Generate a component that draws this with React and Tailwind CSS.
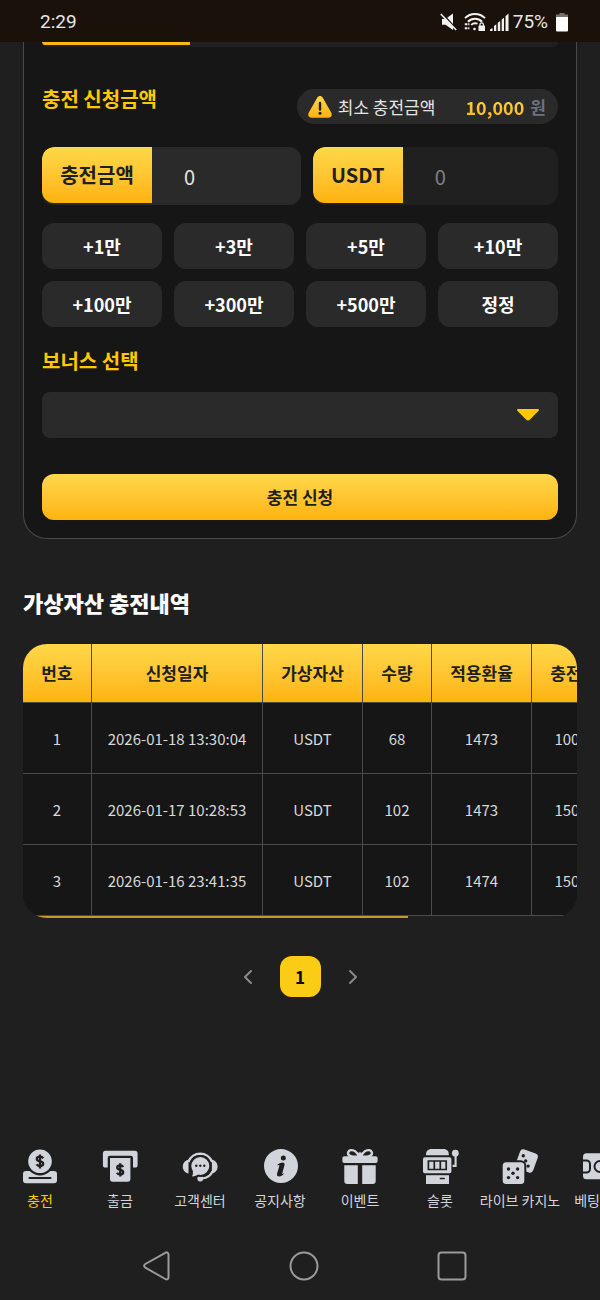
/**
 * App.jsx – Mobile deposit page (virtual asset charge).
 *
 * Sections:
 *  1. StatusBar    – phone clock, signal, battery
 *  2. DepositForm  – amount inputs, quick amount buttons, bonus select, submit
 *  3. HistoryTable – deposit history, wider than the screen
 *  4. Pagination
 *  5. BottomMenu   – category shortcuts
 *  6. SystemNav    – back / home / recents
 */

import { ChevronLeft, ChevronRight } from 'lucide-react'

const quickAmounts = ['+1만', '+3만', '+5만', '+10만', '+100만', '+300만', '+500만', '정정']

const columns = [
    { label: '번호',     width: 'w-[69px]' },
    { label: '신청일자', width: 'w-[171px]' },
    { label: '가상자산', width: 'w-[100px]' },
    { label: '수량',     width: 'w-[69px]' },
    { label: '적용환율', width: 'w-[100px]' },
    { label: '충전금액', width: 'w-[100px]' },
]

const rows = [
    ['1', '2026-01-18 13:30:04', 'USDT', '68', '1473', '100,164'],
    ['2', '2026-01-17 10:28:53', 'USDT', '102', '1473', '150,246'],
    ['3', '2026-01-16 23:41:35', 'USDT', '102', '1474', '150,348'],
]

/* ── Icons ──────────────────────────────────────────────────────────── */

function Icon({ children }) {
    return (
        <svg viewBox="0 0 36 36" className="size-9 overflow-visible fill-[#d1d5db] stroke-[#1f1f1f]" strokeWidth="0" aria-hidden="true">
            {children}
        </svg>
    )
}

function DepositIcon() {
    return (
        <Icon>
            <rect x="1" y="22" width="34" height="12.3" rx="3" />
            <circle cx="18" cy="12.3" r="13" strokeWidth="2.4" />
            <path d="M7.5 29H28.5" strokeWidth="2.2" strokeLinecap="round" />
            <path d="M21.2 9.4c-.6-1.100-1.800-1.700-3.200-1.700-1.800 0-3.200.9-3.200 2.300 0 3.400 6.400 1.600 6.400 4.800 0 1.500-1.400 2.300-3.200 2.300-1.500 0-2.800-.6-3.400-1.800M18 5.400v14" fill="none" strokeWidth="2.3" />
        </Icon>
    )
}

function WithdrawIcon() {
    return (
        <Icon>
            <path d="M3.5 1.7H33a2.6 2.6 0 0 1 2.6 2.6V16a2.6 2.6 0 0 1-2.6 2.6h-2V9a2.3 2.3 0 0 0-2.3-2.3H8A2.3 2.3 0 0 0 5.7 9v9.6H3.5A2.6 2.6 0 0 1 .9 16V4.3A2.6 2.6 0 0 1 3.5 1.7z" />
            <path d="M8 9h20.4v21a2.7 2.7 0 0 1-2.7 2.7h-15A2.7 2.7 0 0 1 8 30z" />
            <path d="M21.2 18c-.6-1.100-1.700-1.600-3-1.600-1.700 0-3 .9-3 2.200 0 3.200 6 1.500 6 4.600 0 1.400-1.300 2.200-3 2.200-1.400 0-2.600-.5-3.200-1.700M18.200 14.300v13.200" fill="none" strokeWidth="2.3" />
        </Icon>
    )
}

function SupportIcon() {
    return (
        <Icon>
            <path d="M6.5 10.800v13.700C3.200 24 .8 21.200.8 17.700s2.400-6.400 5.700-6.900z" />
            <path d="M29.900 10.800v13.700c3.300-.5 5.700-3.300 5.700-6.800s-2.400-6.400-5.700-6.900z" />
            <path d="M6.300 13A12.700 12.700 0 0 1 30.100 13" fill="none" stroke="#d1d5db" strokeWidth="2.4" />
            <path d="M30.500 22c-1.500 4.500-5 7-10.500 7.500" fill="none" stroke="#d1d5db" strokeWidth="2.2" />
            <circle cx="18.3" cy="29.5" r="2.9" />
            <circle cx="18.3" cy="17" r="10" strokeWidth="2" />
            <path d="M10.500 20.500c.8 3 .6 5-.6 6.900 2.800 0 5.100-1 6.900-2.500z" />
            <g fill="#1f1f1f">
                <circle cx="14.3" cy="16.800" r="1.200" />
                <circle cx="18.3" cy="16.800" r="1.200" />
                <circle cx="22.300" cy="16.800" r="1.200" />
            </g>
        </Icon>
    )
}

function InfoIcon() {
    return (
        <Icon>
            <circle cx="19" cy="17.1" r="17" />
            <circle cx="21.300" cy="9" r="2.500" fill="#1f1f1f" />
            <path d="M15 16.300c1.800-2 3.700-2.900 5.500-2.900 1.700 0 2.400 1 2 2.600l-2.200 8.200c-.2.900.3 1 1 .5l1.200-.9c-1.500 2.500-3.400 3.800-5.300 3.800-1.800 0-2.600-1.200-2.100-3l2.200-7.600c.2-.9-.3-1.100-1.100-.7z" fill="#1f1f1f" />
        </Icon>
    )
}

function GiftIcon() {
    return (
        <Icon>
            <path d="M17 7.500C12 8 5.800 7.500 6 4.200 6.300.8 10.500.1 13.300 2.400 15.300 4 16.500 5.800 17 7.500zM19 7.500c5 .5 11.200 0 11-3.300C29.700.8 25.500.1 22.700 2.400 20.700 4 19.500 5.800 19 7.500z" fill="none" stroke="#d1d5db" strokeWidth="2.300" />
            <circle cx="18" cy="5.800" r="2.600" />
            <rect x=".4" y="7.300" width="35.200" height="6.700" rx="1.800" />
            <path d="M2.300 16.200h13.500V35H5.300a3 3 0 0 1-3-3zM20.200 16.200h13.500V32a3 3 0 0 1-3 3H20.200z" />
        </Icon>
    )
}

function SlotIcon() {
    return (
        <Icon>
            <path d="M4 6.300V5.500C4 2.300 6 0 9.500 0h12C25 0 26.800 2.300 26.800 5.500v.8z" />
            <rect x="1" y="8.300" width="28.400" height="16" rx="1.800" />
            <path d="M6.400 12h17.800v8.500H6.400zM12.300 12v8.500M18.300 12v8.500" fill="none" strokeWidth="1.700" />
            <path d="M4 26.200h23V35H4z" />
            <path d="M18.500 29.500h3.600" strokeWidth="1.700" strokeLinecap="round" />
            <circle cx="33.300" cy="4.200" r="3.400" />
            <path d="M33.600 6v10.900h-3" fill="none" stroke="#d1d5db" strokeWidth="2.100" />
        </Icon>
    )
}

function DiceIcon() {
    return (
        <Icon>
            <rect x="15.200" y="2" width="18.800" height="20" rx="3.500" transform="rotate(20 24.600 12)" />
            <rect x="-.3" y="12.300" width="23.600" height="23.600" rx="4.500" strokeWidth="2" />
            <g fill="#1f1f1f">
                <circle cx="21.300" cy="6.700" r="1.700" />
                <circle cx="23.700" cy="11.900" r="1.700" />
                <circle cx="26.100" cy="17.100" r="1.700" />
                <circle cx="6.500" cy="20" r="1.700" />
                <circle cx="15.600" cy="20" r="1.700" />
                <circle cx="11" cy="24.300" r="1.700" />
                <circle cx="6.500" cy="28.600" r="1.700" />
                <circle cx="15.600" cy="28.600" r="1.700" />
            </g>
        </Icon>
    )
}

function TicketIcon() {
    return (
        <Icon>
            <rect x="1" y="4.300" width="34" height="26" rx="3.500" />
            <path d="M0 11.500h4.500a3.500 3.500 0 0 1 3.500 3.500v5a3.500 3.500 0 0 1-3.500 3.500H0M36 11.500h-4.500a3.500 3.500 0 0 0-3.500 3.500v5a3.500 3.500 0 0 0 3.500 3.500H36" fill="none" strokeWidth="2" />
            <circle cx="18" cy="17.500" r="5.500" fill="none" strokeWidth="2" />
        </Icon>
    )
}

const menu = [
    { icon: DepositIcon,  label: '충전', active: true },
    { icon: WithdrawIcon, label: '출금' },
    { icon: SupportIcon,  label: '고객센터' },
    { icon: InfoIcon,     label: '공지사항' },
    { icon: GiftIcon,     label: '이벤트' },
    { icon: SlotIcon,     label: '슬롯' },
    { icon: DiceIcon,     label: '라이브 카지노' },
    { icon: TicketIcon,   label: '베팅내역' },
]

/* ── 1. Status bar ──────────────────────────────────────────────────── */

function StatusBar() {
    return (
        <header className="flex h-[42px] shrink-0 items-center justify-between bg-[#1a120a] pt-0.5 pr-8 pl-10 font-['Roboto'] text-[19px] text-[#e8e6e4]">
            <span>2:29</span>
            <div className="flex items-center gap-1">
                <svg viewBox="0 0 18 18" className="mr-0.5 size-[18px]" fill="#f3f3f3" aria-hidden="true">
                    <path d="M2 6h3.500L13 .5V17L5.500 11.700H2z" />
                    <path d="M1.800.2l15.400 17" stroke="#1a120a" strokeWidth="2" />
                    <path d="M.8 1l15.400 16" stroke="#f3f3f3" strokeWidth="1.600" />
                </svg>
                <svg viewBox="0 0 22 20" className="h-5 w-[22px]" fill="none" stroke="#f3f3f3" strokeWidth="1.900" aria-hidden="true">
                    <path d="M1 6.200C6.500.6 15.500.6 21 6.200M3.900 9.700c4-3.900 10.200-3.900 14.200 0M7.200 12.900c1.800-1.700 4.200-2 6.300-1.200" />
                    <path d="M.8 12.300h4.600M.8 16.200h4.600" strokeDasharray="2.600 .8" />
                    <circle cx="10.500" cy="17" r="1.300" fill="#f3f3f3" stroke="none" />
                    <rect x="14.500" y="13.500" width="6.500" height="5.500" rx=".6" fill="#f3f3f3" stroke="none" />
                    <path d="M16 14v-1.500a1.700 1.700 0 0 1 3.400 0V14" strokeWidth="1.200" />
                </svg>
                <svg viewBox="0 0 19 18" className="h-[18px] w-[19px]" fill="#f3f3f3" aria-hidden="true">
                    <path d="M0 18v-1.500L2.500 15v3zM4 18v-5l2.300-1.800V18zM7.800 18V9.800L10.200 8v10zM11.700 18V6.500L14 4.700V18zM15.500 18V3.200L18.500.5V18z" />
                </svg>
                <span>75%</span>
                <svg viewBox="0 0 12 19" className="ml-1 h-[19px] w-3" aria-hidden="true">
                    <path d="M3.500 0h5v1.500H12V5H0V1.500h3.500z" fill="#77716c" />
                    <path d="M0 4h12v13.500a1 1 0 0 1-1 1H1a1 1 0 0 1-1-1z" fill="#fff" />
                </svg>
            </div>
        </header>
    )
}

/* ── 2. Deposit form ────────────────────────────────────────────────── */

function DepositForm() {
    return (
        <form className="rounded-b-3xl border-x border-b border-[#4a4a4a] bg-[#161616] px-[18px] pb-[18px]">
            {/* lower edge of the step tabs */}
            <div className="h-[5px] overflow-hidden rounded-b-lg bg-[#202020]">
                <div className="h-[3px] w-[148px] rounded-bl-lg bg-[#ffb80c]" />
            </div>

            <div className="mt-[42px] flex items-start justify-between">
                <h2 className="text-xl leading-5 font-bold text-[#ffc800]">충전 신청금액</h2>
                <p className="flex h-[35px] items-center rounded-full bg-[#2a2a2a] pr-3 pl-[11px] text-[17px]">
                    <svg viewBox="0 0 24 22" className="mr-1.5 h-[22px] w-6" aria-hidden="true">
                        <defs>
                            <linearGradient id="warn" x1="0" y1="0" x2="0" y2="1">
                                <stop offset="0" stopColor="#ffd84a" />
                                <stop offset="1" stopColor="#ffb30a" />
                            </linearGradient>
                        </defs>
                        <path d="M9.200 1.800c1.300-2.300 4.300-2.300 5.600 0l8.500 15c1.200 2.200 0 4.900-2.600 4.900H3.300C.7 21.700-.5 19 .7 16.800z" fill="url(#warn)" />
                        <path d="M12 7v6.500" stroke="#1f1f1f" strokeWidth="2.400" strokeLinecap="round" />
                        <circle cx="12" cy="17.300" r="1.500" fill="#1f1f1f" />
                    </svg>
                    <span className="text-[#e5e5e5]">최소 충전금액</span>
                    <strong className="ml-[30px] bg-linear-to-b from-[#ffd84a] to-[#ffb30a] bg-clip-text text-lg font-bold text-transparent">10,000</strong>
                    <span className="ml-1.5 font-bold text-gray-500">원</span>
                </p>
            </div>

            <div className="mt-[23px] grid grid-cols-[19fr_18fr] gap-3">
                <div className="flex h-[58px] items-start overflow-hidden rounded-xl bg-[#2a2a2a]">
                    <label htmlFor="amount" className="flex h-14 w-[110px] shrink-0 items-center justify-center rounded-l-xl bg-linear-to-b from-[#ffd848] to-[#ffb30a] text-xl font-bold text-[#1f1f1f]">
                        충전금액
                    </label>
                    <input id="amount" type="text" defaultValue="0" className="h-full min-w-0 flex-1 bg-transparent px-8 text-xl text-[#e5e5e5] outline-none" />
                </div>
                <div className="flex h-[58px] items-start overflow-hidden rounded-xl bg-[#202020]">
                    <label htmlFor="usdt" className="flex h-14 w-[90px] shrink-0 items-center justify-center rounded-l-xl bg-linear-to-b from-[#ffd848] to-[#ffb30a] text-xl font-bold text-[#1f1f1f]">
                        USDT
                    </label>
                    <input id="usdt" type="text" defaultValue="0" readOnly className="h-full min-w-0 flex-1 bg-transparent px-8 text-xl text-[#808080] outline-none" />
                </div>
            </div>

            <div className="mt-[18px] grid grid-cols-4 gap-3">
                {quickAmounts.map((amount) => (
                    <button key={amount} type="button" className="h-[46px] rounded-xl bg-[#2a2a2a] text-lg font-bold text-white">
                        {amount}
                    </button>
                ))}
            </div>

            <label htmlFor="bonus" className="mt-6 block text-xl leading-5 font-bold text-[#ffc800]">보너스 선택</label>
            <div className="relative mt-[21px]">
                <select id="bonus" className="block h-[46px] w-full appearance-none rounded-lg bg-[#2a2a2a] px-4 text-lg text-white outline-none">
                    <option value=""></option>
                </select>
                <svg viewBox="0 0 22 12" className="pointer-events-none absolute top-[17px] right-[19px] h-3 w-[22px]" fill="#ffc800" aria-hidden="true">
                    <path d="M1 0h20c1 0 1.300 1 .6 1.700L13 10.500c-1.200 1.300-2.800 1.300-4 0L.4 1.700C-.3 1 0 0 1 0z" />
                </svg>
            </div>

            <button type="submit" className="mt-9 h-[46px] w-full rounded-xl bg-linear-to-b from-[#ffd848] to-[#ffb30a] text-[17px] font-bold text-[#1f1f1f]">
                충전 신청
            </button>
        </form>
    )
}

/* ── 3. Deposit history ─────────────────────────────────────────────── */

function HistoryTable() {
    return (
        <section className="mt-[51px]">
            <h2 className="text-[22px] leading-6 font-black text-white">가상자산 충전내역</h2>
            <div className="mt-[30px] overflow-hidden rounded-3xl bg-[#161616]">
                <table className="w-max table-fixed border-separate border-spacing-0 text-center">
                    <thead className="text-[17px] text-[#1f1f1f]">
                        <tr>
                            {columns.map((col) => (
                                <th key={col.label} className={`h-[59px] border-r border-b border-[#4a4a4a] bg-linear-to-b from-[#ffd848] to-[#ffb30a] font-bold ${col.width}`}>
                                    {col.label}
                                </th>
                            ))}
                        </tr>
                    </thead>
                    <tbody className="text-[15px] text-[#d9d9d9]">
                        {rows.map((row) => (
                            <tr key={row[0]}>
                                {row.map((cell, i) => (
                                    <td key={i} className="h-[71px] border-r border-b border-[#4a4a4a] pt-0.5">{cell}</td>
                                ))}
                            </tr>
                        ))}
                    </tbody>
                </table>
                <div className="h-0.5 bg-[#1f1f1f]">
                    <div className="h-full w-[385px] bg-[#c7992a]" />
                </div>
            </div>
        </section>
    )
}

/* ── 4. Pagination ──────────────────────────────────────────────────── */

function Pagination() {
    return (
        <nav className="mt-[38px] flex items-center justify-center gap-5" aria-label="페이지">
            <button type="button" aria-label="이전"><ChevronLeft className="size-6 text-[#8a8a8a]" /></button>
            <button type="button" className="h-[41px] w-[41px] rounded-xl bg-[#facc15] text-[17px] font-bold text-black">1</button>
            <button type="button" aria-label="다음"><ChevronRight className="size-6 text-[#8a8a8a]" /></button>
        </nav>
    )
}

/* ── 5. Bottom menu ─────────────────────────────────────────────────── */

function BottomMenu() {
    return (
        <nav className="mt-auto flex overflow-hidden pt-6 pb-[22px]">
            {menu.map((item) => (
                <a key={item.label} href="#" className="flex w-20 shrink-0 flex-col items-center gap-[5px]">
                    <item.icon />
                    <span className={`text-sm whitespace-nowrap ${item.active ? 'text-[#ffc800]' : 'text-gray-300'}`}>{item.label}</span>
                </a>
            ))}
        </nav>
    )
}

/* ── 6. System navigation ───────────────────────────────────────────── */

function SystemNav() {
    return (
        <div className="flex h-[68px] items-center justify-center gap-[118px] pl-[7px]">
            <button type="button" aria-label="뒤로">
                <svg viewBox="0 0 30 30" className="size-[30px]" fill="none" stroke="#9b9b9b" strokeWidth="2">
                    <path d="M24.300 1.800L4.300 13c-1.600.9-1.600 2.700 0 3.600L24.300 28c1.700 1 3.200.2 3.200-1.800V3.600c0-2-1.500-2.800-3.200-1.800z" />
                </svg>
            </button>
            <button type="button" aria-label="홈">
                <svg viewBox="0 0 30 30" className="size-[30px]" fill="none" stroke="#9b9b9b" strokeWidth="2">
                    <circle cx="15" cy="15" r="13.500" />
                </svg>
            </button>
            <button type="button" aria-label="최근 앱">
                <svg viewBox="0 0 30 30" className="size-[30px]" fill="none" stroke="#9b9b9b" strokeWidth="2">
                    <rect x="1.500" y="1.500" width="27" height="27" rx="3" />
                </svg>
            </button>
        </div>
    )
}

export default function App() {
    return (
        <div className="flex min-h-screen flex-col bg-[#1f1f1f] font-['Noto_Sans_CJK_KR',sans-serif]">
            <StatusBar />
            <main className="px-[23px]">
                <DepositForm />
                <HistoryTable />
                <Pagination />
            </main>
            <BottomMenu />
            <SystemNav />
        </div>
    )
}
